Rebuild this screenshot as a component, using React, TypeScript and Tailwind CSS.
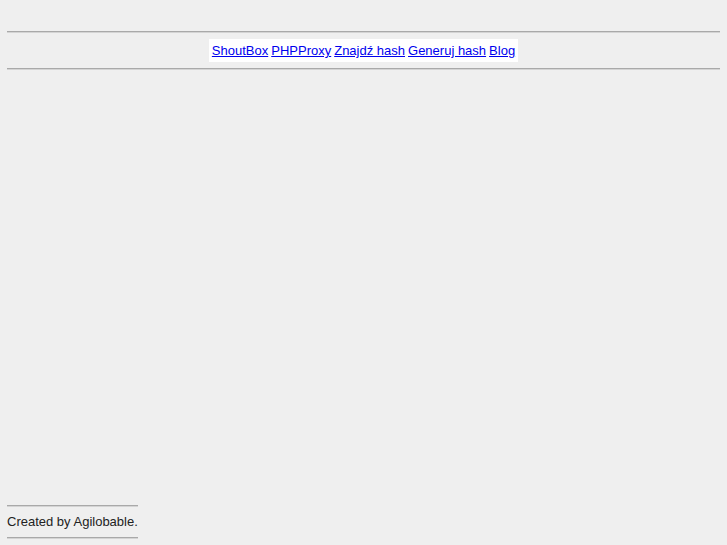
export default function App() {
  const links = ["ShoutBox", "PHPProxy", "Znajdź hash", "Generuj hash", "Blog"];
  return (
    <div className="w-[727px] h-[545px] bg-[#efefef] flex flex-col px-[7px] overflow-hidden" style={{ fontFamily: '"Liberation Sans", Arial, sans-serif' }}>
      <div className="mt-[31px] border-t border-t-[#a9a9a9] border-b border-b-[#d4d4d4]" />
      <div className="flex justify-center pt-[6px] pb-[6px]">
        <div className="bg-white px-[3px] h-[23px] flex items-center gap-[3px] text-[13px] leading-none">
          {links.map((l) => (
            <a key={l} href="#" className="text-[#0000ee] underline">{l}</a>
          ))}
        </div>
      </div>
      <div className="border-t border-t-[#a9a9a9] border-b border-b-[#d4d4d4]" />
      <div className="flex-1" />
      <div className="w-[131px] border-t border-t-[#a9a9a9] border-b border-b-[#d4d4d4]" />
      <div className="h-[30px] flex items-center text-[13px] text-[#222]">Created by Agilobable.</div>
      <div className="w-[131px] border-t border-t-[#a9a9a9] border-b border-b-[#d4d4d4] mb-[6px]" />
    </div>
  );
}
